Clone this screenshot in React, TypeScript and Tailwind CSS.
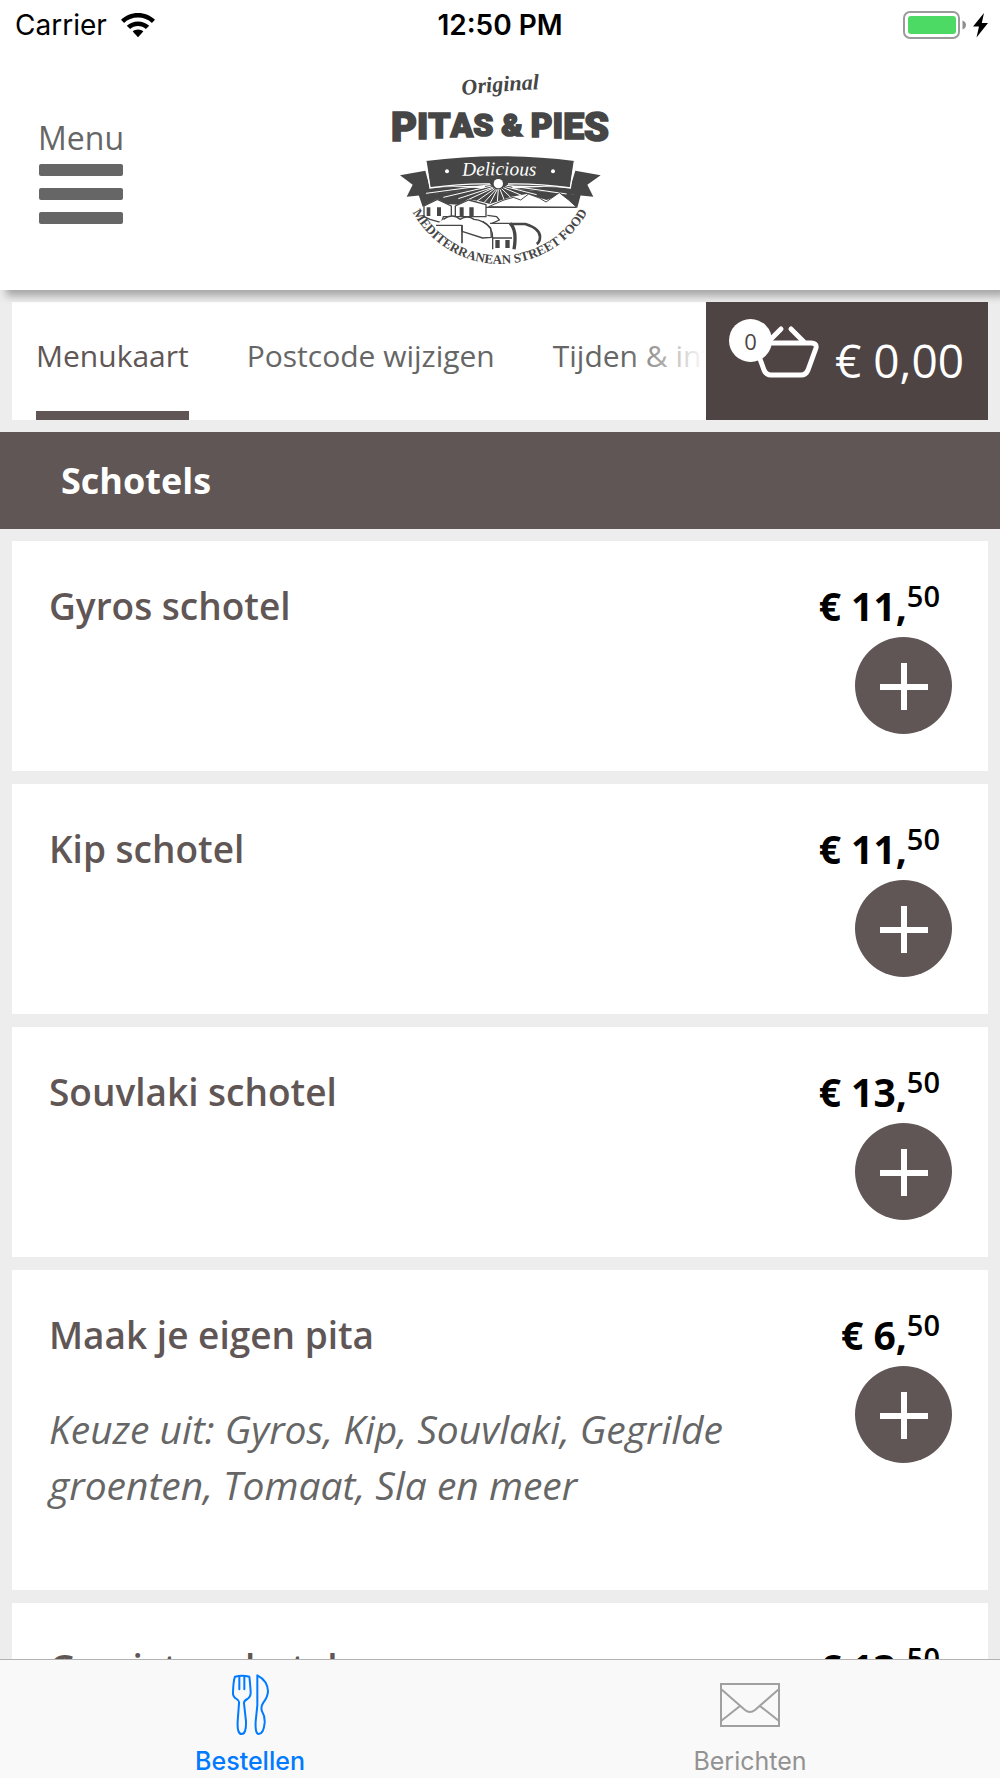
import React from "react";

type Product = { name: string; euros: string; cents: string; description?: string };

const products: Product[] = [
  { name: "Gyros schotel", euros: "11", cents: "50" },
  { name: "Kip schotel", euros: "11", cents: "50" },
  { name: "Souvlaki schotel", euros: "13", cents: "50" },
  {
    name: "Maak je eigen pita",
    euros: "6",
    cents: "50",
    description: "Keuze uit: Gyros, Kip, Souvlaki, Gegrilde groenten, Tomaat, Sla en meer",
  },
  { name: "Gemixte schotel", euros: "13", cents: "50" },
];

function WifiIcon() {
  return (
    <svg viewBox="0 0 34 25" className="h-[25px] w-[34px]" aria-hidden="true">
      <path d="M17 0C10.400 0 4.500 2.600 0 6.700L3.100 10C6.700 6.600 11.600 4.600 17 4.600S27.300 6.600 30.900 10L34 6.700C29.500 2.600 23.600 0 17 0Z" />
      <path d="M17 8.400c-4.300 0-8.200 1.600-11.200 4.300l3.300 3.400c2.100-1.900 4.900-3 7.900-3s5.800 1.100 7.900 3l3.300-3.400c-3-2.700-6.900-4.300-11.200-4.300Z" />
      <path d="M17 16.600c-2 0-3.900.7-5.300 1.900L17 24.200l5.300-5.700c-1.400-1.200-3.300-1.900-5.300-1.900Z" />
    </svg>
  );
}

function BatteryIcon() {
  return (
    <svg viewBox="0 0 86 28" className="h-[28px] w-[86px]" aria-hidden="true">
      <rect x="1" y="1" width="55" height="26" rx="6" fill="#fff" stroke="#9b9b9b" strokeWidth="2" />
      <rect x="5" y="5" width="48" height="18" rx="3" fill="#4cd964" />
      <path d="M59.500 9.500c2.200.8 3.500 2.500 3.500 4.500s-1.300 3.700-3.500 4.500Z" fill="#8e8e8e" />
      <path d="M81 2 70 15.500h6L73.500 26.500 85 12h-6.200Z" fill="#000" />
    </svg>
  );
}

function Logo() {
  return (
    <svg viewBox="0 0 720 660" className="h-[220px] w-[240px]" role="img" aria-label="Original Pitas & Pies">
      <defs>
        <path id="logo-rim" d="M95 450A298 298 0 0 0 625 450" />
        <path id="logo-script" d="M245 106Q350 92 480 88" />
        <path id="logo-delicious" d="M225 348Q360 344 490 348" />
      </defs>
      <g fill="#464646">
        <text className="font-['Liberation_Serif'] text-[66px] font-bold italic" textAnchor="middle">
          <textPath href="#logo-script" startOffset="50%">Original</textPath>
        </text>
        <text
          x="360"
          y="242"
          textAnchor="middle"
          stroke="#464646"
          strokeWidth="5"
          className="font-['Roboto',sans-serif] font-black"
        >
          <tspan className="text-[120px]">P</tspan>
          <tspan dy="-5" className="text-[112px]">I</tspan>
          <tspan dy="-4" className="text-[106px]">T</tspan>
          <tspan dy="-3" className="text-[100px]">A</tspan>
          <tspan dy="-3" className="text-[96px]">S &amp; </tspan>
          <tspan dy="3" className="text-[100px]">P</tspan>
          <tspan dy="3" className="text-[106px]">I</tspan>
          <tspan dy="4" className="text-[112px]">E</tspan>
          <tspan dy="5" className="text-[120px]">S</tspan>
        </text>
        <path d="M138 303Q360 274 583 303L570 381Q360 372 151 381Z" />
        <path d="M60 346 136 332 150 384Q230 377 320 386L80 410 98 374Z" />
        <path d="M662 346 586 332 570 384Q480 377 400 386L640 410 622 374Z" />
        <path d="M116 405 310 386 328 362Q355 350 382 362L400 386 602 405 592 443 540 404 500 420 440 402 395 410 330 432 300 424 265 418 235 434 200 432 172 416 128 440Z" />
      </g>
      <g stroke="#fff" strokeWidth="3" fill="none">
        <path d="M138 304 150 384Q250 370 330 372M583 304 571 384Q470 370 384 372" strokeWidth="4" />
        <path d="M138 400 332 374M190 412 334 378M235 416 338 382M262 420 340 384M290 424 344 386M312 428 348 388M330 430 352 388M352 424 355 388M372 418 360 388M392 412 365 386M425 406 370 383M470 404 376 380M560 402 380 376" />
      </g>
      <circle cx="355" cy="371" r="14" fill="#fff" />
      <circle cx="201" cy="334" r="6" fill="#fff" />
      <circle cx="519" cy="334" r="6" fill="#fff" />
      <text fill="#fff" className="font-['Liberation_Serif'] text-[58px] italic" textAnchor="middle">
        <textPath href="#logo-delicious" startOffset="50%">Delicious</textPath>
      </text>
      <g fill="#fff" stroke="#464646" strokeWidth="4" strokeLinejoin="round">
        <path d="M326 440 372 420 400 412 422 420 446 402 478 414 498 426 538 398 566 420 590 442Z" strokeWidth="3" />
        <path d="M132 470V438L172 418 214 438V470H190L184 488 150 478Z" />
        <path d="M226 470V438L266 420 318 434V470Z" />
        <path d="M318 442H588M322 466 350 470 358 480 336 490" fill="none" />
        <path d="M190 478Q218 458 240 478Q262 464 282 478Q310 480 332 504L334 532 308 534 246 514V496H168" />
        <path d="M308 484Q338 500 338 534V568M338 534H396M330 490H390" fill="none" />
        <path d="M390 490Q412 510 402 568" fill="none" strokeWidth="10" />
        <path d="M396 492H436Q480 506 480 530Q480 546 470 552" fill="none" strokeWidth="8" />
        <path d="M246 496V550" fill="none" strokeWidth="5" />
      </g>
      <g fill="#464646">
        <path d="M140 442h11v26h-11zM171 442h12v26h-12zM239 442h12v26h-12zM268 442h13v26h-13zM346 540h13v24h-13zM376 540h13v24h-13z" />
        <text className="font-['Liberation_Serif'] text-[39px] font-bold" textAnchor="middle">
          <textPath href="#logo-rim" startOffset="50%">MEDITERRANEAN STREET FOOD</textPath>
        </text>
      </g>
    </svg>
  );
}

function BasketIcon() {
  return (
    <svg
      viewBox="0 0 66 56"
      className="h-[56px] w-[66px]"
      fill="none"
      stroke="#fff"
      strokeWidth="5"
      strokeLinecap="round"
      strokeLinejoin="round"
      aria-hidden="true"
    >
      <path d="M10 20H58Q64 20 63 25L55 47Q53 52 48 52H18Q13 52 11 47L3 25Q2 20 10 20Z" />
      <path d="M28 6 15 19M38 6 51 19" />
    </svg>
  );
}

function CutleryIcon() {
  return (
    <svg
      viewBox="0 0 111 186"
      className="h-[62px] w-[37px]"
      fill="none"
      stroke="currentColor"
      strokeWidth="6"
      strokeLinejoin="round"
      strokeLinecap="round"
      aria-hidden="true"
    >
      <path d="M9 8Q30 2 52 8Q53 12 56 52Q57 68 46 75Q35 81 36 88L42 142Q43 180 29 180T17 142L21 88Q23 81 14 75Q2 68 3 56Q4 20 9 8Z" />
      <path d="M22 8V46M37 8V46" />
      <path d="M76 4Q107 20 108 52Q107 69 94 86Q85 99 90 112Q99 126 98 146Q95 180 80 180Q69 180 71 142L76 94Z" />
    </svg>
  );
}

function EnvelopeIcon() {
  return (
    <svg
      viewBox="0 0 60 44"
      className="h-[44px] w-[60px]"
      fill="none"
      stroke="#a0a0a0"
      strokeWidth="2"
      aria-hidden="true"
    >
      <rect x="1" y="1" width="58" height="42" />
      <path d="M1 6 25 27Q30 31 35 27L59 6M1 38 20 23M59 38 40 23" />
    </svg>
  );
}

function ProductCard({ product }: { product: Product }) {
  return (
    <li className="flex shrink-0 items-start justify-between bg-white py-[37px] pr-9 pl-[37px]">
      <div className="max-w-[720px]">
        <h3 className="text-[37px] leading-[56px] font-semibold text-[#605655]">{product.name}</h3>
        {product.description && (
          <p className="mt-[38px] mb-[40px] text-[39px] leading-[56px] text-[#666] italic">{product.description}</p>
        )}
      </div>
      <div className="flex flex-col items-end">
        <p className="mr-3 flex text-[39px] leading-[55px] font-bold text-black">
          € {product.euros},<span className="text-[29px] leading-[36px] font-semibold">{product.cents}</span>
        </p>
        <button
          type="button"
          aria-label={`${product.name} toevoegen`}
          className="mt-1 flex size-[97px] items-center justify-center rounded-full bg-[#605655]"
        >
          <svg viewBox="0 0 48 48" className="size-12" stroke="#fff" strokeWidth="6" aria-hidden="true">
            <path d="M24 1V49M0 25H48" />
          </svg>
        </button>
      </div>
    </li>
  );
}

export default function App() {
  return (
    <div className="flex h-dvh flex-col overflow-hidden bg-[#ededed] font-['Open_Sans',sans-serif]">
      <header className="relative z-10 shrink-0 bg-white shadow-[6px_6px_8px_rgba(0,0,0,0.3)]">
        <div className="grid h-[50px] grid-cols-3 items-center px-[15px] font-['Inter',sans-serif] text-[28px] text-black">
          <div className="flex items-center gap-[14px]">
            <span>Carrier</span>
            <WifiIcon />
          </div>
          <span className="text-center font-semibold">12:50 PM</span>
          <div className="-mr-1 flex justify-end">
            <BatteryIcon />
          </div>
        </div>
        <div className="grid grid-cols-[1fr_auto_1fr] items-start py-[10px]">
          <button type="button" className="mt-[64px] ml-[39px] flex w-[84px] flex-col items-center gap-3 text-[#666]">
            <span className="text-[32px] leading-[28px]">Menu</span>
            <span className="h-3 w-full rounded-[2px] bg-[#666]" />
            <span className="h-3 w-full rounded-[2px] bg-[#666]" />
            <span className="h-3 w-full rounded-[2px] bg-[#666]" />
          </button>
          <Logo />
        </div>
      </header>

      <main className="flex min-h-0 flex-1 flex-col overflow-y-auto [scrollbar-width:none]">
        <div className="mx-3 mt-3 flex h-[118px] shrink-0 bg-white">
          <nav className="relative flex min-w-0 flex-1 gap-[58px] overflow-hidden pl-6 text-[30px] leading-[108px] whitespace-nowrap text-[#666]">
            <a href="#menukaart" className="border-b-[9px] border-[#605655] text-[#605655]">
              Menukaart
            </a>
            <a href="#postcode">Postcode wijzigen</a>
            <a href="#tijden">Tijden &amp; info</a>
            <span className="pointer-events-none absolute inset-y-0 right-0 w-20 bg-linear-to-r from-white/0 to-white" />
          </nav>
          <button
            type="button"
            aria-label="Winkelmandje"
            className="relative flex w-[282px] shrink-0 items-center justify-end bg-[#4e4443] pr-6 text-white"
          >
            <span className="mb-5">
              <BasketIcon />
            </span>
            <span className="mb-[2px] ml-4 text-[46px] leading-none">€ 0,00</span>
            <span className="absolute top-[17px] left-[23px] flex size-[43px] items-center justify-center rounded-full bg-white text-[22px] leading-none text-[#4e4443]">
              0
            </span>
          </button>
        </div>

        <h2 className="mt-3 shrink-0 bg-[#605655] pl-[61px] text-[36px] leading-[97px] font-bold text-white">
          Schotels
        </h2>

        <ul className="mx-3 mt-3 flex flex-col gap-[13px]">
          {products.map((product) => (
            <ProductCard key={product.name} product={product} />
          ))}
        </ul>
      </main>

      <footer className="grid h-[119px] shrink-0 grid-cols-2 border-t border-[#b2b2b2] bg-[#f9f9f9] font-['Inter',sans-serif] text-[25px] leading-[30px]">
        <a href="#bestellen" className="flex flex-col items-center justify-between pt-[14px] pb-[2px] font-medium text-[#007aff]">
          <CutleryIcon />
          Bestellen
        </a>
        <a href="#berichten" className="flex flex-col items-center justify-between pt-[23px] pb-[2px] text-[#929292]">
          <EnvelopeIcon />
          Berichten
        </a>
      </footer>
    </div>
  );
}
